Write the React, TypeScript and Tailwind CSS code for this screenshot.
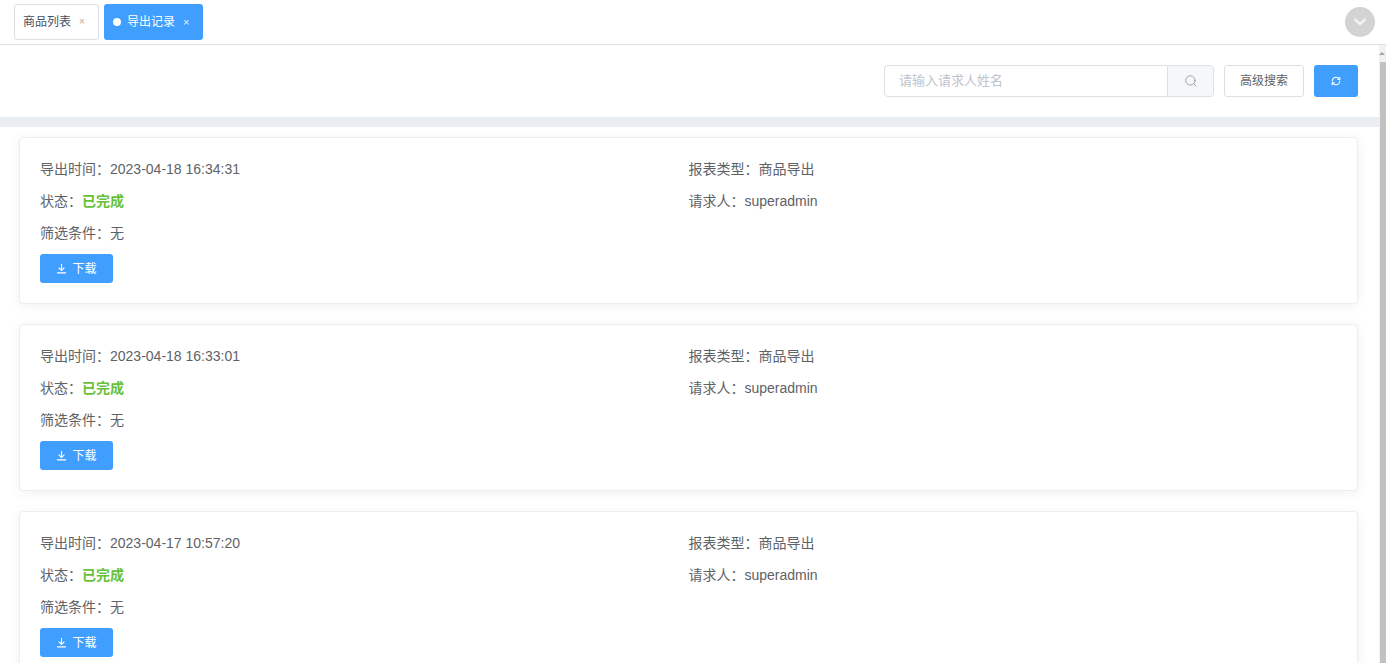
import { RefreshCw, Search } from "lucide-react";

const font = "font-['Liberation_Sans','Noto_Sans_CJK_SC',sans-serif]";

const records = ["2023-04-18 16:34:31", "2023-04-18 16:33:01", "2023-04-17 10:57:20"];

function DownloadIcon() {
  return (
    <svg width="11" height="11" viewBox="0 0 11 11" fill="none" stroke="currentColor" strokeWidth="1.1">
      <path d="M5.5 1v6.2M2.6 4.6l2.9 2.8 2.9-2.8M1 9.900h9" />
    </svg>
  );
}

function RecordCard({ time }: { time: string }) {
  return (
    <div className="mb-5 h-[167px] shrink-0 rounded-[4px] border border-[#ebeef5] bg-white px-5 pt-[15px] shadow-[0_2px_12px_0_rgba(0,0,0,0.06)]">
      <div className="flex text-sm leading-8 text-[#606266]">
        <div className="w-[648.5px]">
          <div>导出时间：{time}</div>
          <div>
            状态：<span className="font-bold text-[#67c23a]">已完成</span>
          </div>
          <div>筛选条件：无</div>
        </div>
        <div>
          <div>报表类型：商品导出</div>
          <div>请求人：superadmin</div>
        </div>
      </div>
      <button className="mt-[5px] flex h-[29px] w-[73px] items-center justify-center gap-[5px] rounded-[3px] bg-[#409eff] text-xs text-white">
        <DownloadIcon />
        下载
      </button>
    </div>
  );
}

export default function App() {
  return (
    <div className={`${font} flex h-[663px] w-[1386px] flex-col overflow-hidden bg-white`}>
      <div className="flex h-[45px] shrink-0 items-start border-b border-[#dcdfe6] pl-[14px] pr-[11px]">
        <div className="mt-1 flex h-9 w-[85px] items-center rounded-[3px] border border-[#dcdfe6] pl-2 text-xs text-[#495060]">
          商品列表
          <span className="ml-2 text-[10px] text-[#c9a888]">×</span>
        </div>
        <div className="ml-[5px] mt-1 flex h-9 w-[99px] items-center rounded-[3px] bg-[#409eff] pl-[9px] text-xs text-white">
          <span className="mr-[6px] h-2 w-2 rounded-full bg-white" />
          导出记录
          <span className="ml-2 text-[11px] text-white/85">×</span>
        </div>
        <div className="ml-auto mt-[7px] flex h-[30px] w-[30px] items-center justify-center rounded-full bg-[#d3d3d3] text-[#f4f4f4]">
          <svg width="14" height="8" viewBox="0 0 14 8" fill="none" stroke="currentColor" strokeWidth="2.4">
            <path d="M1.500 1l5.500 5.200L12.500 1" />
          </svg>
        </div>
      </div>
      <div className="flex min-h-0 flex-1">
        <div className="flex min-w-0 flex-1 flex-col">
          <div className="flex h-[72px] shrink-0 items-center justify-end pr-[21px]">
            <div className="flex h-8 w-[330px] rounded-[4px] border border-[#dcdfe6]">
              <div className="flex flex-1 items-center pl-[14px] text-[13px] text-[#c0c4cc]">请输入请求人姓名</div>
              <div className="flex w-[46px] items-center justify-center rounded-r-[4px] border-l border-[#dcdfe6] bg-[#f5f7fa] text-[#909399]">
                <Search size={14} strokeWidth={1.4} />
              </div>
            </div>
            <button className="ml-[10px] h-8 w-20 rounded-[3px] border border-[#dcdfe6] bg-white text-xs text-[#606266]">
              高级搜索
            </button>
            <button className="ml-[10px] flex h-8 w-11 items-center justify-center rounded-[3px] bg-[#409eff] text-white">
              <RefreshCw size={10} strokeWidth={2.6} />
            </button>
          </div>
          <div className="h-[10px] shrink-0 bg-[#e9edf1]" />
          <div className="flex min-h-0 flex-1 flex-col overflow-hidden pl-[19px] pr-[21px] pt-[10px]">
            {records.map((time) => (
              <RecordCard key={time} time={time} />
            ))}
          </div>
        </div>
        <div className="flex w-[7px] shrink-0 flex-col bg-[#f1f1f1]">
          <div className="flex h-[17px] items-center justify-end pr-[1px]">
            <div className="h-0 w-0 border-x-[3px] border-b-[3px] border-x-transparent border-b-[#a3a3a3]" />
          </div>
          <div className="ml-[1px] flex-1 bg-[#c1c1c1]" />
        </div>
      </div>
    </div>
  );
}
